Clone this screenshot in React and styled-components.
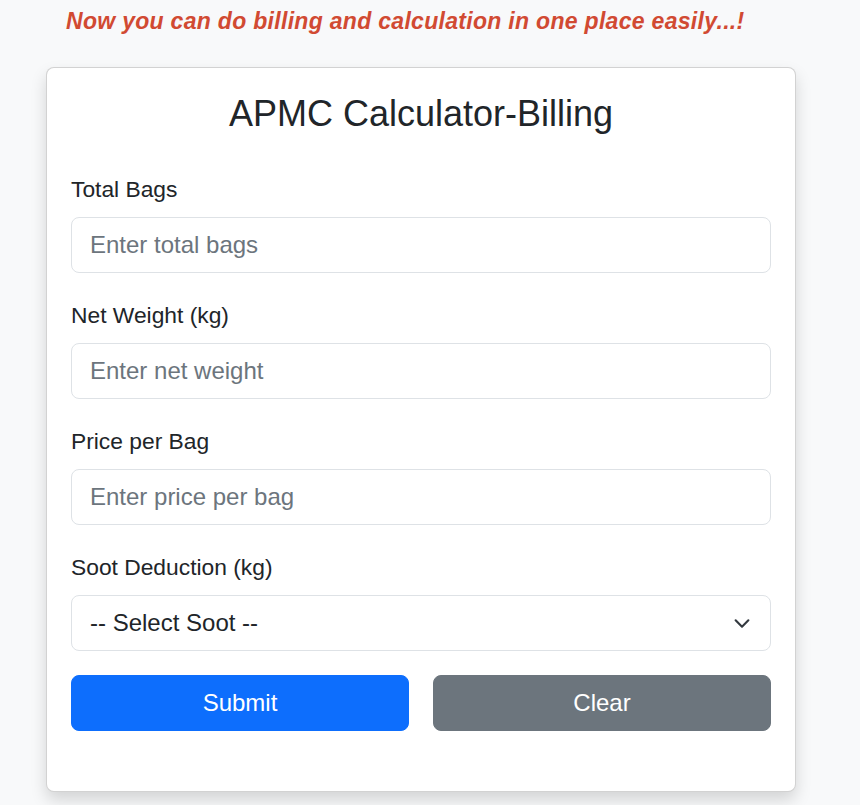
import styled, { createGlobalStyle } from 'styled-components';

const GlobalStyle = createGlobalStyle`
  * {
    box-sizing: border-box;
  }
  body {
    margin: 0;
    background: #f8f9fa;
    font-family: 'Liberation Sans', Arial, sans-serif;
    color: #212529;
  }
`;

const chevron =
  "data:image/svg+xml,%3csvg xmlns='http://www.w3.org/2000/svg' viewBox='0 0 16 16'%3e%3cpath fill='none' stroke='%23343a40' stroke-linecap='round' stroke-linejoin='round' stroke-width='2' d='m2 5 6 6 6-6'/%3e%3c/svg%3e";

const Page = styled.main`
  width: 750px;
  margin-left: 46px;
  padding-bottom: 40px;
`;

const Tagline = styled.h4`
  margin: 0 0 31px 20px;
  padding-top: 6px;
  font-size: 23px;
  line-height: 30px;
  font-weight: 700;
  font-style: italic;
  letter-spacing: 0.3px;
  color: #d14a32;
`;

const Card = styled.section`
  background: #fff;
  border: 1px solid rgba(0, 0, 0, 0.175);
  border-radius: 8px;
  box-shadow: 0 8px 16px rgba(0, 0, 0, 0.15);
  padding: 24px 24px 60px;
`;

const Title = styled.h2`
  margin: 0 0 38px;
  text-align: center;
  font-size: 36px;
  line-height: 43px;
  font-weight: 400;
`;

const Form = styled.form`
  display: flex;
  flex-direction: column;
  gap: 26px;
`;

const Field = styled.div`
  display: flex;
  flex-direction: column;
`;

const Label = styled.label`
  font-size: 22.8px;
  line-height: 33px;
  margin-bottom: 11px;
`;

const Input = styled.input`
  height: 56px;
  width: 100%;
  padding: 9px 18px;
  font-family: inherit;
  font-size: 24px;
  line-height: 36px;
  color: #212529;
  border: 1px solid #dee2e6;
  border-radius: 8px;
  background: #fff;
  outline: none;
  &::placeholder {
    color: #6c757d;
  }
`;

const Select = styled.select`
  appearance: none;
  height: 56px;
  width: 100%;
  padding: 9px 56px 9px 18px;
  font-family: inherit;
  font-size: 24px;
  line-height: 36px;
  color: #212529;
  border: 1px solid #dee2e6;
  border-radius: 8px;
  background: #fff url("${chevron}") no-repeat right 17px center / 22px 17px;
  outline: none;
`;

const Actions = styled.div`
  display: grid;
  grid-template-columns: 1fr 1fr;
  gap: 24px;
  margin-top: -2px;
`;

const Button = styled.button`
  height: 56px;
  border: 1px solid ${(p) => p.$bg};
  border-radius: 8px;
  background: ${(p) => p.$bg};
  color: #fff;
  font-family: inherit;
  font-size: 24px;
  cursor: pointer;
`;

const fields = [
  { id: 'bags', label: 'Total Bags', placeholder: 'Enter total bags' },
  { id: 'weight', label: 'Net Weight (kg)', placeholder: 'Enter net weight' },
  { id: 'price', label: 'Price per Bag', placeholder: 'Enter price per bag' },
];

const App = () => {
  return (
    <>
      <GlobalStyle />
      <Page>
        <Tagline>Now you can do billing and calculation in one place easily...!</Tagline>
        <Card>
          <Title>APMC Calculator-Billing</Title>
          <Form onSubmit={(e) => e.preventDefault()}>
            {fields.map((f) => (
              <Field key={f.id}>
                <Label htmlFor={f.id}>{f.label}</Label>
                <Input id={f.id} type='number' placeholder={f.placeholder} />
              </Field>
            ))}
            <Field>
              <Label htmlFor='soot'>Soot Deduction (kg)</Label>
              <Select id='soot' defaultValue=''>
                <option value=''>-- Select Soot --</option>
                <option value='1'>1</option>
                <option value='2'>2</option>
              </Select>
            </Field>
            <Actions>
              <Button type='submit' $bg='#0d6efd'>
                Submit
              </Button>
              <Button type='button' $bg='#6c757d'>
                Clear
              </Button>
            </Actions>
          </Form>
        </Card>
      </Page>
    </>
  );
};

export default App;
